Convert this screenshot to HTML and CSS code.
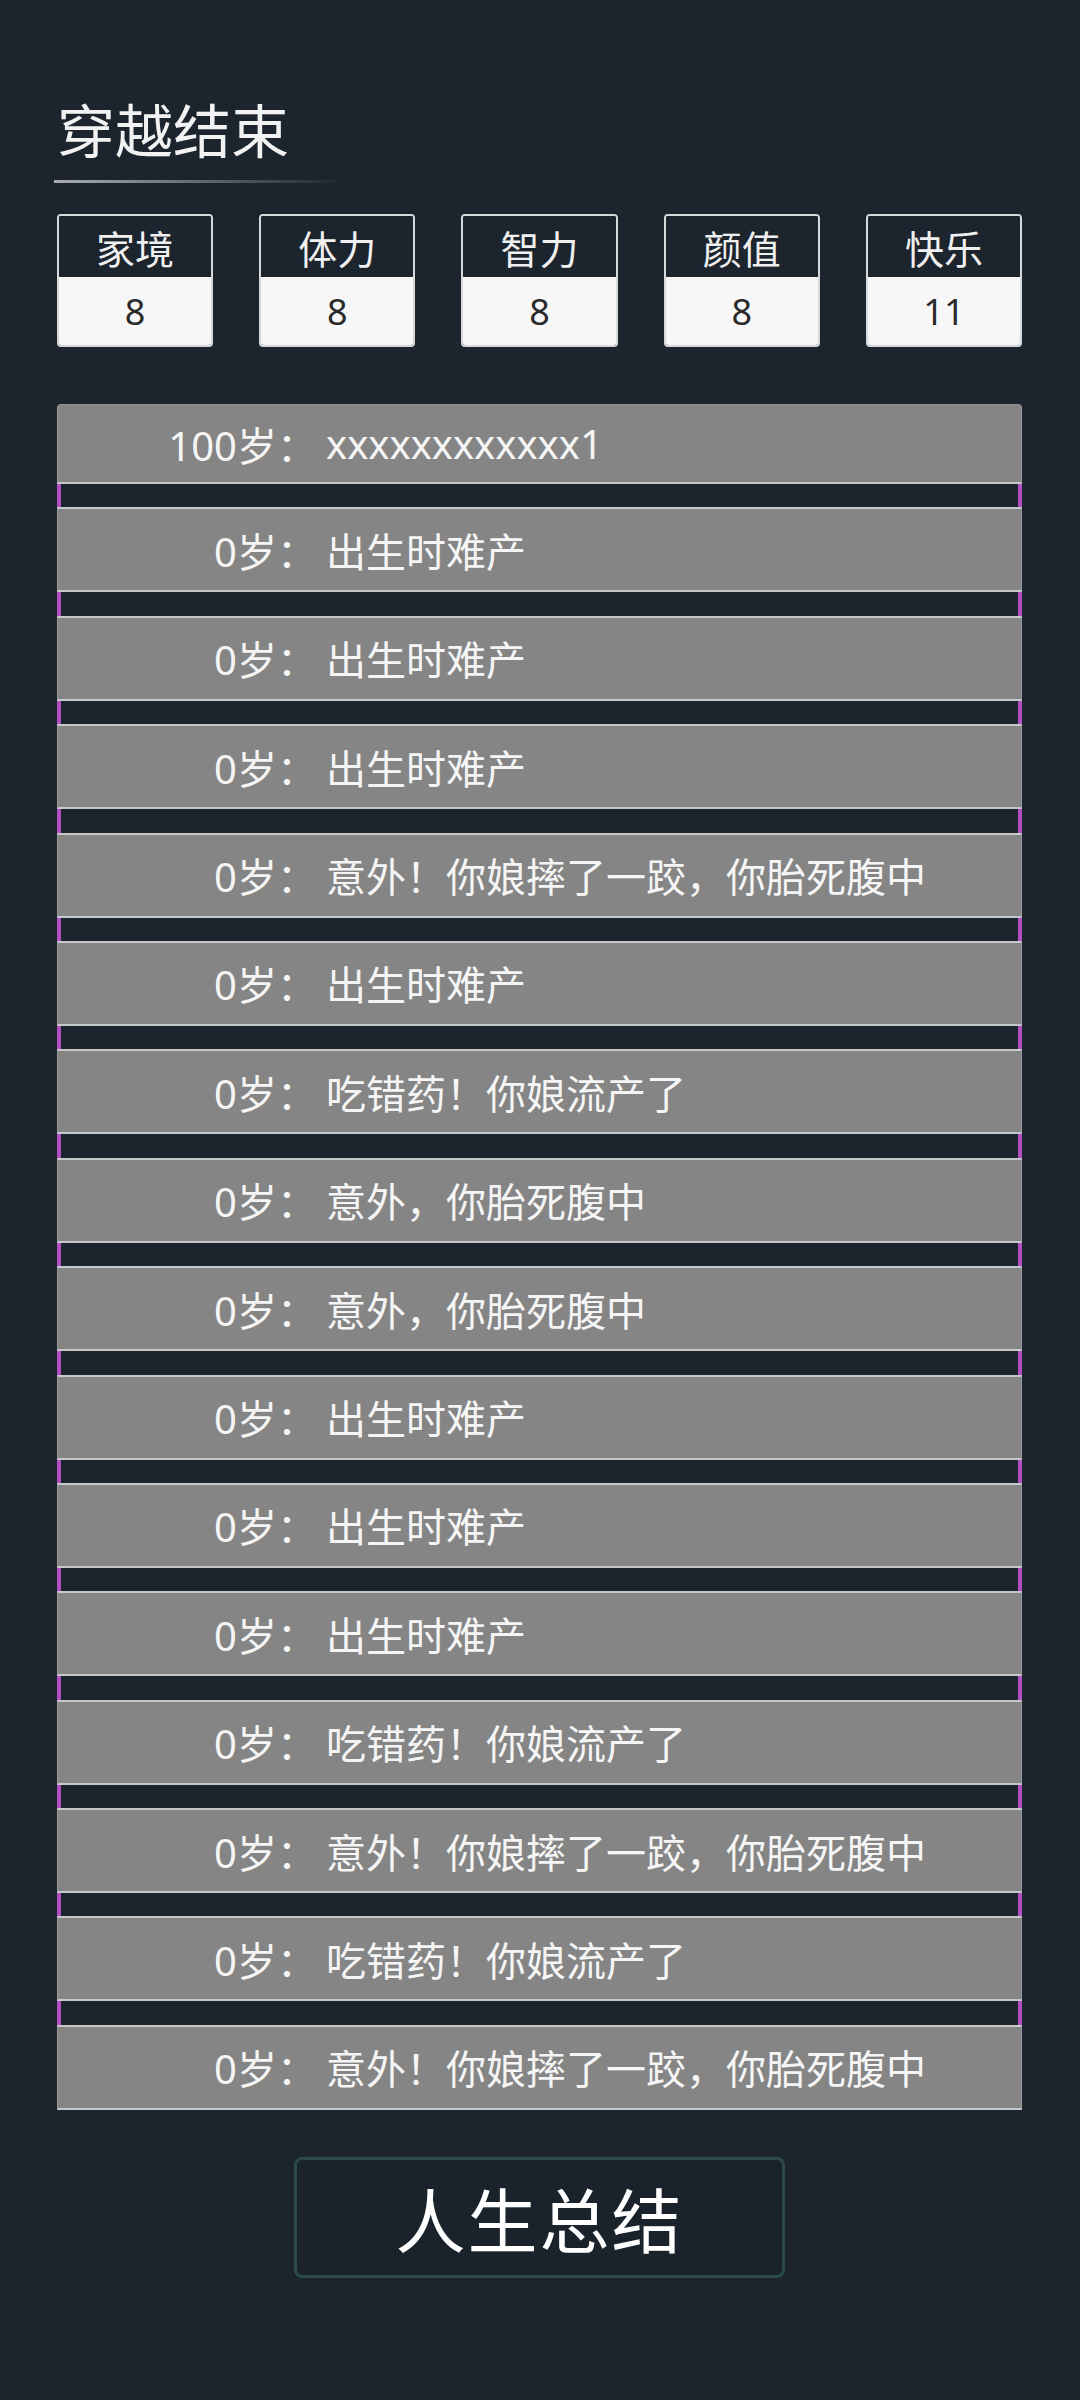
FILE: index.html
```html
<!DOCTYPE html>
<html lang="zh-CN">
<head>
  <meta charset="UTF-8" />
  <meta name="viewport" content="width=device-width, initial-scale=1.0"/>
  <title>穿越结束</title>
  <link rel="stylesheet" href="styles.css">
</head>
<body>
  <div class="page">
    <h1 class="title">穿越结束</h1>
    <div class="title-line"></div>

    <div class="stats">
      <div class="stat"><div class="stat-name">家境</div><div class="stat-value">8</div></div>
      <div class="stat"><div class="stat-name">体力</div><div class="stat-value">8</div></div>
      <div class="stat"><div class="stat-name">智力</div><div class="stat-value">8</div></div>
      <div class="stat"><div class="stat-name">颜值</div><div class="stat-value">8</div></div>
      <div class="stat"><div class="stat-name">快乐</div><div class="stat-value">11</div></div>
    </div>

    <div class="events">
      <div class="event first"><span class="age">100岁：</span><span class="text">xxxxxxxxxxxx1</span></div>
      <div class="spacer"></div>
      <div class="event"><span class="age">0岁：</span><span class="text">出生时难产</span></div>
      <div class="spacer"></div>
      <div class="event"><span class="age">0岁：</span><span class="text">出生时难产</span></div>
      <div class="spacer"></div>
      <div class="event"><span class="age">0岁：</span><span class="text">出生时难产</span></div>
      <div class="spacer"></div>
      <div class="event"><span class="age">0岁：</span><span class="text">意外！你娘摔了一跤，你胎死腹中</span></div>
      <div class="spacer"></div>
      <div class="event"><span class="age">0岁：</span><span class="text">出生时难产</span></div>
      <div class="spacer"></div>
      <div class="event"><span class="age">0岁：</span><span class="text">吃错药！你娘流产了</span></div>
      <div class="spacer"></div>
      <div class="event"><span class="age">0岁：</span><span class="text">意外，你胎死腹中</span></div>
      <div class="spacer"></div>
      <div class="event"><span class="age">0岁：</span><span class="text">意外，你胎死腹中</span></div>
      <div class="spacer"></div>
      <div class="event"><span class="age">0岁：</span><span class="text">出生时难产</span></div>
      <div class="spacer"></div>
      <div class="event"><span class="age">0岁：</span><span class="text">出生时难产</span></div>
      <div class="spacer"></div>
      <div class="event"><span class="age">0岁：</span><span class="text">出生时难产</span></div>
      <div class="spacer"></div>
      <div class="event"><span class="age">0岁：</span><span class="text">吃错药！你娘流产了</span></div>
      <div class="spacer"></div>
      <div class="event"><span class="age">0岁：</span><span class="text">意外！你娘摔了一跤，你胎死腹中</span></div>
      <div class="spacer"></div>
      <div class="event"><span class="age">0岁：</span><span class="text">吃错药！你娘流产了</span></div>
      <div class="spacer"></div>
      <div class="event"><span class="age">0岁：</span><span class="text">意外！你娘摔了一跤，你胎死腹中</span></div>
    </div>

    <div class="actions">
      <button class="summary-btn">人生总结</button>
    </div>
  </div>
</body>
</html>
```

FILE: styles.css
```css
body {
  margin: 0;
  padding: 0;
  background-color: #1c242e;
  font-family: "Noto Sans", "Noto Sans CJK SC", sans-serif;
  color: #f4f4f4;
}

.page {
  padding: 96px 58px 0 57px;
}

.title {
  margin: 0;
  font-size: 58px;
  font-weight: 400;
  line-height: 70px;
  color: #f2f2f2;
}

.title-line {
  width: 292px;
  height: 3px;
  margin: 14px 0 0 -3px;
  background: linear-gradient(to right, #a9adb2, rgba(169, 173, 178, 0));
}

.stats {
  display: grid;
  grid-template-columns: repeat(5, 1fr);
  column-gap: 46px;
  margin-top: 31px;
}

.stat {
  height: 133px;
  box-sizing: border-box;
  border: 2px solid #d6d8da;
  border-radius: 4px;
  overflow: hidden;
  display: flex;
  flex-direction: column;
}

.stat-name {
  height: 61px;
  display: flex;
  align-items: center;
  justify-content: center;
  background-color: #1c242e;
  color: #f0f0f0;
  font-size: 39px;
}

.stat-value {
  flex: 1;
  display: flex;
  align-items: center;
  justify-content: center;
  background-color: #f7f7f7;
  color: #2a2a2a;
  font-size: 36px;
}

.events {
  margin-top: 57px;
}

.event {
  height: 85px;
  box-sizing: border-box;
  display: flex;
  align-items: center;
  background-color: #858585;
  border-top: 2px solid #c6c7c8;
  border-bottom: 2px solid #c6c7c8;
  border-left: 1px solid #9c9c9c;
  border-right: 1px solid #9c9c9c;
  font-size: 40px;
  color: #f5f5f5;
}

.event.first {
  height: 80px;
  border-top: 1px solid #8e8e8e;
  border-radius: 4px 4px 0 0;
}

.age {
  width: 259px;
  margin-right: 9px;
  flex-shrink: 0;
  text-align: right;
}

.text {
  white-space: nowrap;
}

.spacer {
  height: 23.4px;
  box-sizing: border-box;
  border-left: 4px solid #b14fc2;
  border-right: 4px solid #b14fc2;
}

.actions {
  display: flex;
  justify-content: center;
  margin-top: 47px;
}

.summary-btn {
  width: 491px;
  height: 121px;
  background-color: #1a232b;
  border: 3px solid #2c4a4d;
  border-radius: 8px;
  color: #ffffff;
  font-family: "Noto Sans CJK SC", sans-serif;
  font-size: 70px;
  letter-spacing: 2px;
  cursor: pointer;
}
```
